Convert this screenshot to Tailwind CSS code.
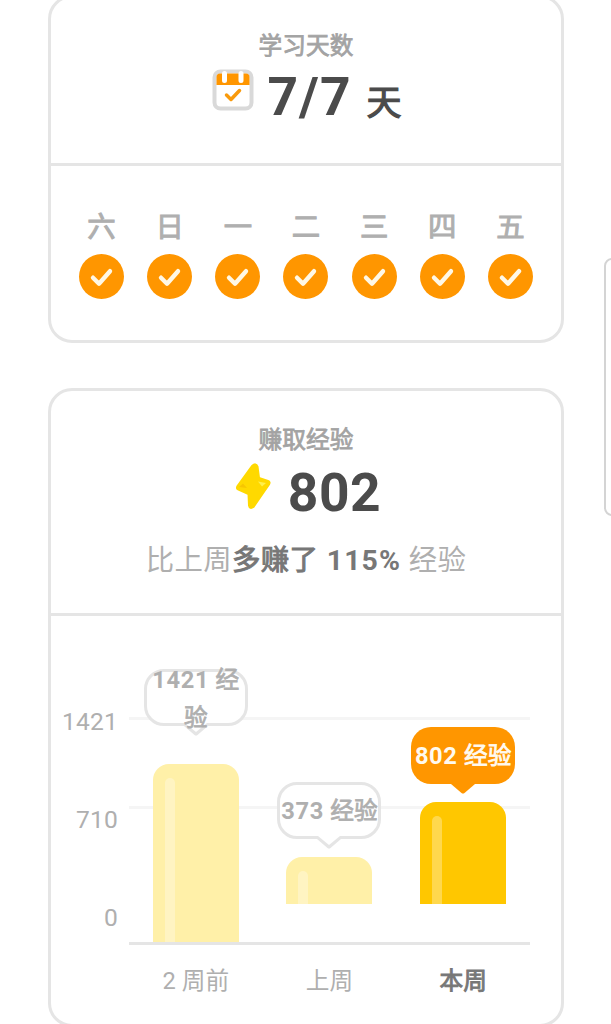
<!DOCTYPE html>
<html lang="zh-CN">
<head>
<meta charset="utf-8">
<title>学习周报</title>
<script src="https://cdn.jsdelivr.net/npm/@tailwindcss/browser@4"></script>
</head>
<body class="bg-white">
<svg class="hidden">
  <symbol id="tick" viewBox="0 0 45 45"><circle cx="22.5" cy="22.5" r="22.5" fill="#ff9600"/><path d="M14 23.7 20 29.7 31 17.2" fill="none" stroke="#fff8e6" stroke-width="4.4" stroke-linecap="round" stroke-linejoin="round"/></symbol>
</svg>
<div class="relative h-[1024px] w-[611px] overflow-hidden font-['Roboto','Noto_Sans_CJK_SC',sans-serif] text-[#afafaf]">
  <main class="-mt-[5px] ml-12 flex w-[516px] flex-col gap-[45px]">
    <section class="h-[348px] rounded-[24px] border-[3px] border-[#e5e5e5]">
      <header class="flex h-[168px] flex-col items-center border-b-[3px] border-[#e5e5e5] pt-[30px]">
        <h2 class="h-9 text-[23.7px] leading-9 text-[#a3a3a3] [-webkit-text-stroke:0.8px]">学习天数</h2>
        <div class="flex h-[60px] pl-[2px] text-[#4b4b4b]">
          <svg class="mt-[5px] mr-[13px] h-[42px] w-[42px]" viewBox="0 0 42 42">
            <rect x="2.5" y="2.5" width="37" height="37" rx="6" fill="#fff" stroke="#d9d9d9" stroke-width="4"/>
            <path d="M4.5 16V8q0-3.500 3.500-3.500h26q3.500 0 3.500 3.500v8z" fill="#ff9600"/>
            <path d="M12.500 4.500v7M29 4.500v7" stroke="#fff" stroke-width="5" stroke-linecap="round"/>
            <path d="M14.500 26 19 30.500 27.500 21.500" fill="none" stroke="#f99a0c" stroke-width="3.500" stroke-linecap="round" stroke-linejoin="round"/>
          </svg>
          <div class="flex items-baseline gap-[15px] text-[53.3px] leading-[67px] font-bold"><span class="tracking-[1.1px]">7/7</span><span class="text-[35px] font-normal [-webkit-text-stroke:1.2px]">天</span></div>
        </div>
      </header>
      <div class="grid grid-cols-7 px-[16.5px] pt-[40px] text-center text-[28.4px] leading-[44px] [-webkit-text-stroke:1px]">
        <div class="flex flex-col items-center gap-[4px]"><span>六</span><svg class="size-[45px]"><use href="#tick"/></svg></div>
        <div class="flex flex-col items-center gap-[4px]"><span>日</span><svg class="size-[45px]"><use href="#tick"/></svg></div>
        <div class="flex flex-col items-center gap-[4px]"><span>一</span><svg class="size-[45px]"><use href="#tick"/></svg></div>
        <div class="flex flex-col items-center gap-[4px]"><span>二</span><svg class="size-[45px]"><use href="#tick"/></svg></div>
        <div class="flex flex-col items-center gap-[4px]"><span>三</span><svg class="size-[45px]"><use href="#tick"/></svg></div>
        <div class="flex flex-col items-center gap-[4px]"><span>四</span><svg class="size-[45px]"><use href="#tick"/></svg></div>
        <div class="flex flex-col items-center gap-[4px]"><span>五</span><svg class="size-[45px]"><use href="#tick"/></svg></div>
      </div>
    </section>

    <section class="h-[639px] rounded-[24px] border-[3px] border-[#e5e5e5]">
      <header class="flex h-[225px] flex-col items-center border-b-[3px] border-[#e5e5e5] pt-[31px]">
        <h2 class="h-9 text-[23.7px] leading-9 text-[#a3a3a3] [-webkit-text-stroke:0.8px]">赚取经验</h2>
        <div class="flex h-[81px] pl-[4px] text-[#4b4b4b]">
          <svg class="mt-[4px] mr-[17px] h-[49px] w-[36px]" viewBox="0 0 36 49">
            <path d="M17 4 2.500 24q-1.500 2.500 1 3.700L13.500 32 14 43.500q.8 4 4.500 1.500L34 22.500q1.500-2.500-1-3.500L24 16 22.500 4.500q-1.500-4-5.500-.5z" fill="#ffd900" stroke="#ffd900" stroke-width="2" stroke-linejoin="round"/>
            <path d="M23 19.500 31 21 27 24.500z" fill="#fff04d"/><path d="M8 21.500 12 26 4 25z" fill="#f7c600"/>
          </svg>
          <div class="text-[53.3px] leading-[70px] font-bold tracking-[0.6px]">802</div>
        </div>
        <p class="text-[28.4px] leading-[44px] tracking-[0.4px] whitespace-nowrap">比上周<span class="text-[#777]"><span class="[-webkit-text-stroke:1px]">多赚了</span><b class="tracking-[1.2px]"> 115%</b></span> 经验</p>
      </header>

      <div class="flex pt-[50px] text-[23.7px]">
        <div class="flex w-[67px] flex-col gap-[62px] pt-[38px] text-right text-[24.6px] leading-[36px] tracking-[0.2px]">
          <span>1421</span><span>710</span><span>0</span>
        </div>
        <div class="relative ml-[11px] w-[401px]">
          <div class="absolute inset-x-0 top-[51px] h-[3px] bg-[#f5f5f5]"></div>
          <div class="absolute inset-x-0 top-[140px] h-[3px] bg-[#f5f5f5]"></div>
          <div class="relative grid h-[279px] grid-cols-3 border-b-[3px] border-[#e5e5e5]">
            <div class="flex flex-col items-center pt-[3px]">
              <div class="relative flex h-[57px] w-[104px] shrink-0 items-center justify-center rounded-[20px] border-[3px] border-[#e5e5e5] bg-white pt-[3px] text-center leading-[38px]">
                <svg class="absolute top-[51px] left-[37px] h-[14px] w-6" viewBox="0 0 24 14"><path d="M0 0v3L10.500 12q1.500 1.200 3 0L24 3V0z" fill="#e5e5e5"/><path d="M1 0 12 9 23 0z" fill="#fff"/></svg>
                <span class="relative whitespace-nowrap"><b class="tracking-[0.6px]">1421 </b><span class="[-webkit-text-stroke:0.8px]">经<br>验</span></span>
              </div>
              <div class="mt-[38px] h-[178px] w-[86px] shrink-0 rounded-t-[16px] bg-[#fff0a8] pt-[14px] pl-[12px]"><div class="h-full w-[10px] rounded-t-full bg-white/30"></div></div>
            </div>
            <div class="flex flex-col items-center pt-[116px]">
              <div class="relative flex h-[57px] w-[104px] shrink-0 items-center justify-center rounded-[20px] border-[3px] border-[#e5e5e5] bg-white pt-[2px] whitespace-nowrap">
                <svg class="absolute top-[51px] left-[37px] h-[14px] w-6" viewBox="0 0 24 14"><path d="M0 0v3L10.500 12q1.500 1.200 3 0L24 3V0z" fill="#e5e5e5"/><path d="M1 0 12 9 23 0z" fill="#fff"/></svg>
                <span><b class="tracking-[0.6px]">373 </b><span class="[-webkit-text-stroke:0.8px]">经验</span></span>
              </div>
              <div class="mt-[18px] h-[47px] w-[86px] shrink-0 rounded-t-[16px] bg-[#fff0a8] pt-[14px] pl-[12px]"><div class="h-full w-[10px] rounded-t-full bg-white/30"></div></div>
            </div>
            <div class="flex flex-col items-center pt-[61px]">
              <div class="relative flex h-[57px] w-[104px] shrink-0 items-center justify-center rounded-[20px] bg-[#ff9600] pt-[2px] whitespace-nowrap text-[#fffaf0]">
                <svg class="absolute top-[54px] left-[40px] h-[14px] w-6" viewBox="0 0 24 14"><path d="M0 0v3L10.500 12q1.500 1.200 3 0L24 3V0z" fill="#ff9600"/></svg>
                <span><b class="tracking-[0.6px]">802 </b><span class="[-webkit-text-stroke:0.8px]">经验</span></span>
              </div>
              <div class="mt-[18px] h-[102px] w-[86px] shrink-0 rounded-t-[16px] bg-[#ffc700] pt-[14px] pl-[12px]"><div class="h-full w-[10px] rounded-t-full bg-white/30"></div></div>
            </div>
          </div>
          <div class="grid grid-cols-3 pt-[18px] text-center leading-9"><span>2 周前</span><span>上周</span><span class="text-[#777] [-webkit-text-stroke:0.9px]">本周</span></div>
        </div>
      </div>
    </section>
  </main>
  <aside class="absolute top-[258px] left-[604px] h-[258px] w-10 rounded-[8px] border-2 border-[#d4d4d4]"></aside>
</div>
</body>
</html>
